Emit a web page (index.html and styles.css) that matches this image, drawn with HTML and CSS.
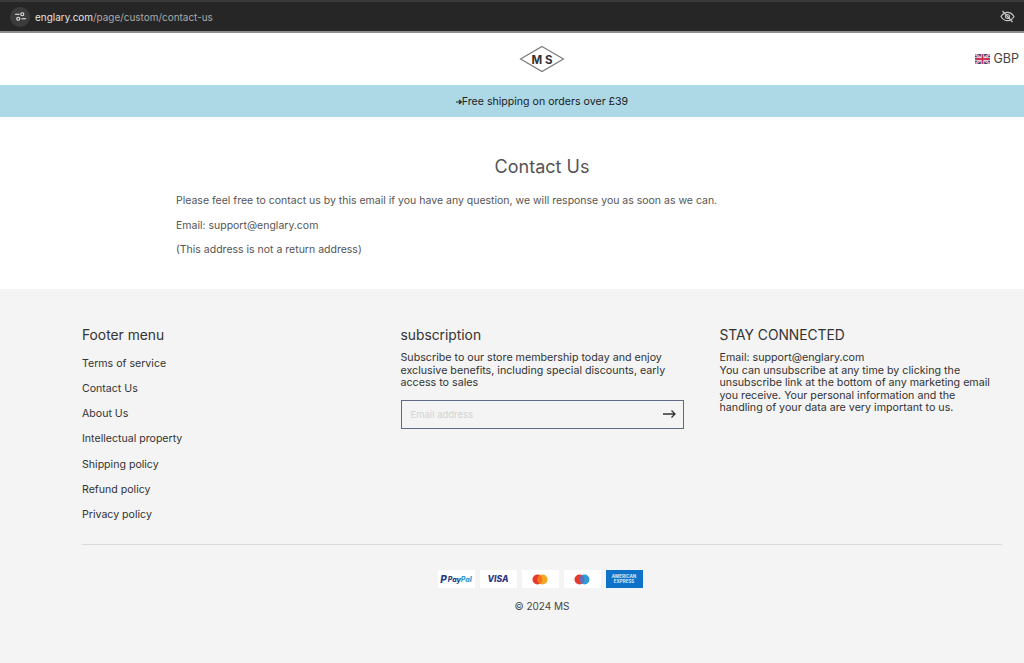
FILE: index.html
```html
<!DOCTYPE html>
<html lang="en">
<head>
<meta charset="utf-8">
<title>Contact Us</title>
<link rel="stylesheet" href="styles.css">
</head>
<body>
<div class="browser">
  <div class="url-pill">
    <span class="tune">
      <svg width="11" height="9" viewBox="0 0 12 10" fill="none" stroke="#e8e8e8" stroke-width="1.2"><path d="M0 2.5h5"/><circle cx="8" cy="2.5" r="1.7"/><path d="M12 7.5H7"/><circle cx="3.5" cy="7.5" r="1.7"/></svg>
    </span>
    <span class="url"><b>englary.com</b>/page/custom/contact-us</span>
  </div>
  <svg class="eye" width="15" height="13" viewBox="0 0 15 13" fill="none" stroke="#c4c4c4" stroke-width="1.2"><path d="M1 6.5C2.8 3.6 5 2.3 7.5 2.3S12.2 3.6 14 6.5c-1.8 2.9-4 4.2-6.5 4.2S2.8 9.4 1 6.5z"/><circle cx="7.5" cy="6.5" r="2"/><path d="M2.5 1l10 11"/></svg>
</div>
<header class="header">
  <svg class="logo" width="46" height="28" viewBox="0 0 46 28" fill="none"><path d="M23 1.5 44.500 14 23 26.500 1.500 14z" stroke="#777" stroke-width="1.100"/><text class="logo-text" x="23" y="18.500" text-anchor="middle">M S</text></svg>
  <div class="currency">
    <svg width="15" height="10" viewBox="0 0 15 10"><rect width="15" height="10" rx="1" fill="#3d3f78"/><path d="M0 0l15 10M15 0L0 10" stroke="#f1e6ea" stroke-width="2"/><path d="M0 0l15 10M15 0L0 10" stroke="#c8345a" stroke-width=".7"/><path d="M7.500 0v10M0 5h15" stroke="#f1e6ea" stroke-width="3.400"/><path d="M7.500 0v10M0 5h15" stroke="#c8345a" stroke-width="1.800"/></svg>
    <span>GBP</span>
  </div>
</header>
<div class="banner"><div class="banner-text"><svg class="banner-arrow" width="6" height="6" viewBox="0 0 6 6" fill="none" stroke="#222" stroke-width="1.200"><path d="M0 3h5M3 1l2.300 2L3 5"/></svg>Free shipping on orders over £39</div></div>
<main class="contact">
  <h1>Contact Us</h1>
  <p>Please feel free to contact us by this email if you have any question, we will response you as soon as we can.</p>
  <p>Email: support@englary.com</p>
  <p>(This address is not a return address)</p>
</main>
<footer class="footer">
  <div class="columns">
    <section>
      <h2>Footer menu</h2>
      <ul class="links">
        <li>Terms of service</li>
        <li>Contact Us</li>
        <li>About Us</li>
        <li>Intellectual property</li>
        <li>Shipping policy</li>
        <li>Refund policy</li>
        <li>Privacy policy</li>
      </ul>
    </section>
    <section>
      <h2>subscription</h2>
      <p class="blurb">Subscribe to our store membership today and enjoy exclusive benefits, including special discounts, early access to sales</p>
      <div class="field">
        <span class="placeholder">Email address</span>
        <svg width="13" height="10" viewBox="0 0 13 10" fill="none" stroke="#333" stroke-width="1.300"><path d="M0 5h12M8.500 1.500 12 5 8.500 8.500"/></svg>
      </div>
    </section>
    <section>
      <h2>STAY CONNECTED</h2>
      <p class="blurb narrow">Email: support@englary.com<br>You can unsubscribe at any time by clicking the unsubscribe link at the bottom of any marketing email you receive. Your personal information and the handling of your data are very important to us.</p>
    </section>
  </div>
  <div class="bottom">
    <div class="pay">
      <span class="card"><i class="pp-p">P</i><i class="pp-a">Pay</i><i class="pp-b">Pal</i></span>
      <span class="card visa">VISA</span>
      <span class="card"><svg width="16" height="11" viewBox="0 0 16 11"><circle cx="5.500" cy="5.500" r="5" fill="#e8392d"/><circle cx="10.500" cy="5.500" r="5" fill="#f5a623"/><path d="M8 1.200a5 5 0 0 1 0 8.600a5 5 0 0 1 0-8.600z" fill="#f4741f"/></svg></span>
      <span class="card"><svg width="16" height="11" viewBox="0 0 16 11"><circle cx="5.500" cy="5.500" r="5" fill="#e8392d"/><circle cx="10.500" cy="5.500" r="5" fill="#2f9bd8"/><path d="M8 1.200a5 5 0 0 1 0 8.600a5 5 0 0 1 0-8.600z" fill="#6a6bb0"/></svg></span>
      <span class="card amex">AMERICAN<br>EXPRESS</span>
    </div>
    <div class="copy">© 2024 MS</div>
  </div>
</footer>
</body>
</html>
```
FILE: styles.css
```css
* { box-sizing: border-box; }
html, body { margin: 0; padding: 0; }
body {
  width: 1024px;
  height: 663px;
  overflow: hidden;
  background: #fff;
  color: #333;
  font-family: Inter, "Open Sans", "Liberation Sans", sans-serif;
}
.browser {
  height: 33px;
  background: #262626;
  border-top: 2px solid #3a3a3a;
  border-bottom: 2px solid #8d8d8d;
  display: flex;
  align-items: center;
  justify-content: space-between;
  padding: 0 9px 0 10px;
}
.url-pill { display: flex; align-items: center; gap: 5px; }
.tune {
  width: 20px;
  height: 20px;
  border-radius: 50%;
  background: #3c3c3c;
  display: flex;
  align-items: center;
  justify-content: center;
}
.url { font-size: 9.950px; color: #a9a9a9; }
.url b { font-weight: 400; color: #e4e4e4; }
.header {
  height: 52px;
  padding-left: 60px;
  display: flex;
  align-items: center;
  justify-content: center;
  position: relative;
  background: #fff;
}
.logo { display: block; margin-top: -1px; }
.logo-text { font-size: 11.500px; font-weight: 700; fill: #333; font-family: Inter, sans-serif; }
.currency {
  position: absolute;
  right: 5px;
  top: 18px;
  display: flex;
  align-items: center;
  gap: 4px;
  font-size: 12.500px;
  color: #444;
}
.banner {
  height: 32px;
  background: #add8e6;
  padding-left: 60px;
  display: flex;
  align-items: center;
  justify-content: center;
}
.banner-text { font-size: 10.600px; color: #222; }
.contact {
  height: 172px;
  padding: 39px 116px 0 176px;
  color: #555;
}
.contact h1 {
  margin: 0 0 16px;
  font-size: 18px;
  line-height: 22px;
  font-weight: 400;
  text-align: center;
  color: #555;
}
.contact p {
  margin: 0 0 10px;
  font-size: 10.500px;
  line-height: 14.500px;
}
.footer {
  height: 374px;
  background: #f4f4f4;
  padding: 38px 22px 0 82px;
  color: #333;
}
.columns {
  display: grid;
  grid-template-columns: repeat(3, 1fr);
  gap: 36px;
  height: 218px;
  border-bottom: 1px solid #d9d9d9;
}
.columns h2 {
  margin: 0 0 8px;
  font-size: 13.800px;
  line-height: 17px;
  font-weight: 400;
  color: #333;
}
.links { list-style: none; margin: 13px 0 0; padding: 0; }
.links li { font-size: 10.600px; line-height: 13px; margin-bottom: 12.150px; }
.blurb { margin: 0; font-size: 10.700px; line-height: 12.600px; }
.narrow { max-width: 278px; }
.field {
  margin-top: 10px;
  width: 283px;
  height: 29px;
  border: 1px solid #5d6a84;
  display: flex;
  align-items: center;
  justify-content: space-between;
  padding: 0 7px 0 9px;
  background: #f4f4f4;
}
.placeholder { font-size: 9.500px; color: #d2d2d2; }
.bottom { display: flex; flex-direction: column; align-items: center; }
.pay { display: flex; gap: 5px; margin: 25px 4px 0 0; }
.card {
  width: 37px;
  height: 18px;
  background: #fff;
  display: flex;
  align-items: center;
  justify-content: center;
  font-size: 8px;
}
.card i { font-style: italic; font-weight: 800; font-size: 7px; }
.card .pp-p { color: #1f3f86; font-size: 10px; margin-right: 1px; }
.pp-a { color: #1f3f86; }
.pp-b { color: #2f9bd8; }
.visa { color: #2c3481; font-weight: 800; font-style: italic; font-size: 8.500px; }
.amex {
  background: #0f72c9;
  color: #d8e9f7;
  font-size: 4.500px;
  line-height: 5px;
  font-weight: 700;
  text-align: center;
}
.copy { margin-top: 12px; font-size: 10px; line-height: 13px; color: #444; }
```
